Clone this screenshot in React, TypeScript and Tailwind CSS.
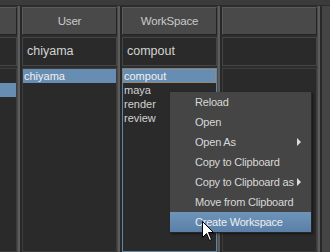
import React from "react";

const Sep = () => (
  <div className="flex h-full w-[5px] shrink-0">
    <div className="w-[1px] bg-[#484848]" />
    <div className="w-[2px] bg-[#5c5c5c]" />
    <div className="w-[2px] bg-[#282828]" />
  </div>
);

type ColProps = {
  title?: string;
  value?: string;
  items?: string[];
  selected?: number;
  focused?: boolean;
};

const Column = ({ title = "", value = "", items = [], selected = -1, focused = false }: ColProps) => (
  <div className="flex h-full w-[95px] shrink-0 flex-col bg-[#2d2d2d] pt-[1px]">
    <div className="flex h-[28px] items-center justify-center border border-t-[#5a5a5a] border-l-[#5a5a5a] border-b-[#242424] border-r-[#242424] bg-[#494949] pt-[1px] text-[11.5px] tracking-[-0.2px] text-[#c9c9c9]">
      {title}
    </div>
    <div className="mt-[2px] flex h-[29px] items-center border border-[#454545] bg-[#2a2a2a] pl-[4px] text-[12.5px] text-[#d2d2d2]">
      {value}
    </div>
    <div
      className={
        "mt-[2px] flex-1 border bg-[#2a2a2a] " +
        (focused ? "border-[#5f86ab]" : "border-[#3d3d3d]")
      }
    >
      {items.map((it, i) => (
        <div
          key={i}
          className={
            "flex h-[14px] items-center pl-[1px] leading-[14px] " +
            (i === selected ? "bg-[#678db3] text-[#f0f0f0] " : "text-[#d2d2d2] ") +
            (i === selected && focused ? "outline-1 outline-dotted outline-offset-[-1px] outline-[#c8823a]" : "")
          }
        >
          {it}
        </div>
      ))}
    </div>
  </div>
);

const menuItems: { label: string; sub?: boolean }[] = [
  { label: "Reload" },
  { label: "Open" },
  { label: "Open As", sub: true },
  { label: "Copy to Clipboard" },
  { label: "Copy to Clipboard as", sub: true },
  { label: "Move from Clipboard" },
  { label: "Create Workspace" },
];

export default function App() {
  return (
    <div className="relative h-[252px] w-[330px] overflow-hidden bg-[#444444] font-['Liberation_Sans',sans-serif] text-[11px]">
      <div className="h-[5px] bg-[#3b3b3b]" />
      <div className="h-[1px] bg-[#2c2c2c]" />
      <div className="flex h-[246px]">
        <div className="flex h-full w-[17px] shrink-0 justify-end overflow-hidden">
          <Column items={["", ""]} selected={1} />
        </div>
        <Sep />
        <Column title="User" value="chiyama" items={["chiyama"]} selected={0} />
        <Sep />
        <Column
          title="WorkSpace"
          value="compout"
          items={["compout", "maya", "render", "review"]}
          selected={0}
          focused
        />
        <Sep />
        <Column />
        <Sep />
      </div>

      <div className="absolute left-[170px] top-[92px] w-[142px] border-r border-b border-[#262626] bg-[#454545] tracking-[-0.2px] shadow-[1px_1px_2px_rgba(0,0,0,0.5)]">
        {menuItems.map((m, i) => (
          <div
            key={i}
            className={
              "relative flex h-[20px] items-center pl-[25px] " +
              (i === menuItems.length - 1
                ? "bg-gradient-to-b from-[#6e94ba] to-[#5a80a7] text-[#eeeeee]"
                : "text-[#d8d8d8]")
            }
          >
            {m.label}
            {m.sub && (
              <svg className="absolute right-[9px] top-[6px]" width="5" height="8" viewBox="0 0 5 8">
                <polygon points="0,0 4,4 0,8" fill="#dcdcdc" />
              </svg>
            )}
          </div>
        ))}
      </div>

      <svg className="absolute left-[202px] top-[221px]" width="13" height="21" viewBox="0 0 13 21">
        <polygon
          points="0.5,0.5 0.5,16.5 4.5,12.5 7.5,19.5 9.5,18.5 6.5,11.5 11.5,11.5"
          fill="#ffffff"
          stroke="#000000"
          strokeWidth="1"
          strokeLinejoin="miter"
        />
      </svg>
    </div>
  );
}
